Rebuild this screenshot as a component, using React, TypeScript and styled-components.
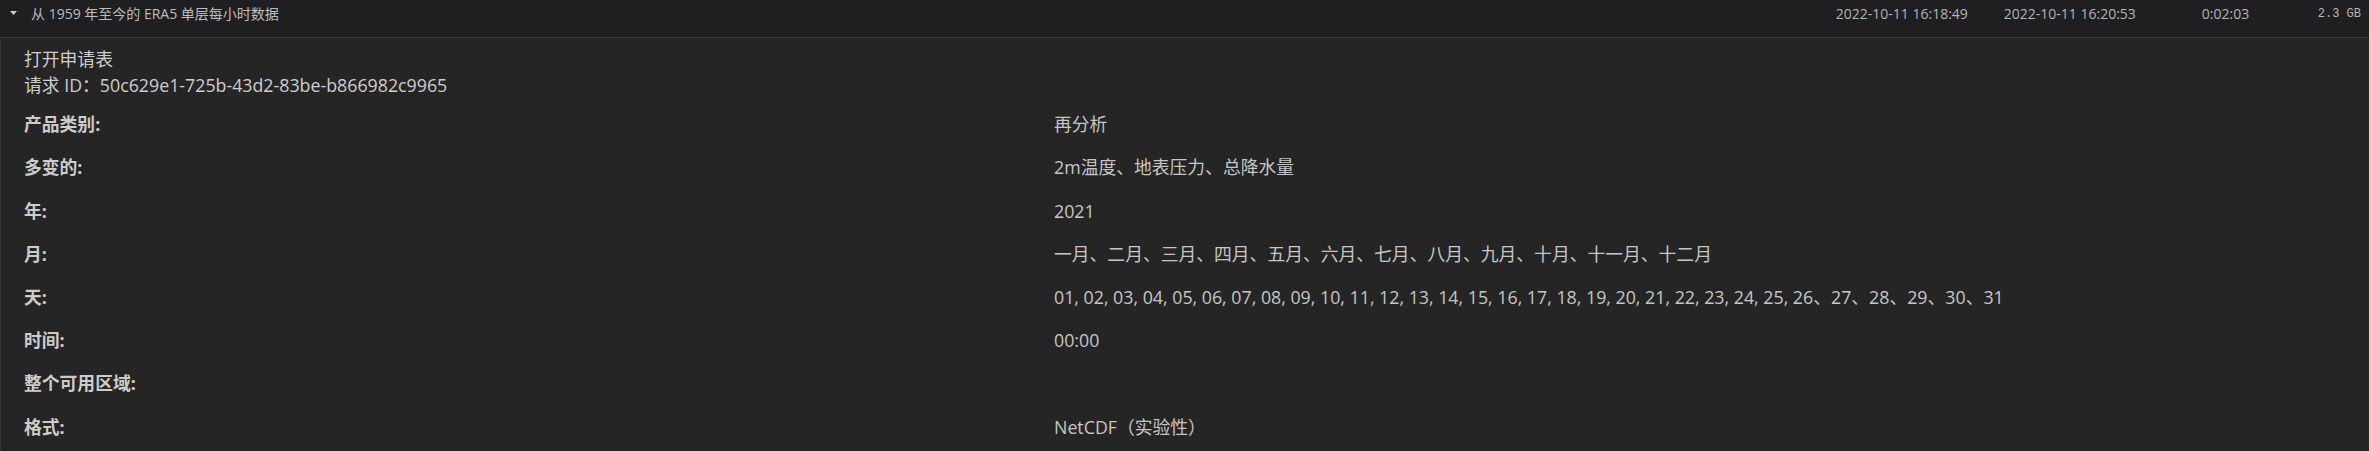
import React from 'react';
import styled, { createGlobalStyle } from 'styled-components';

const GlobalStyle = createGlobalStyle`
  html, body {
    margin: 0;
    padding: 0;
    background: #252525;
  }
  body {
    font-family: "Open Sans", "Noto Sans CJK SC", sans-serif;
  }
`;

const Page = styled.div`
  width: 2369px;
  height: 451px;
  overflow: hidden;
  display: flex;
  flex-direction: column;
  background: #252525;
`;

const Header = styled.div`
  display: flex;
  align-items: flex-start;
  height: 38px;
  box-sizing: border-box;
  padding: 4px 8px 0 10px;
  background: #1f1f22;
  border-bottom: 1px solid #3a3a3c;
  font-size: 14px;
  line-height: 20px;
  color: #bdbdbd;
  white-space: nowrap;
`;

const Caret = styled.svg`
  flex: none;
  margin-top: 7px;
`;

const Title = styled.div`
  flex: 1;
  margin-left: 14px;
`;

const Cell = styled.div<{ $w: number }>`
  flex: none;
  width: ${(p) => p.$w}px;
  color: #b4b4b4;
`;

const Size = styled.div`
  flex: none;
  font-family: "Liberation Mono", "DejaVu Sans Mono", monospace;
  font-size: 12px;
  color: #b8b8b8;
`;

const Body = styled.div`
  flex: 1;
  border-left: 1px solid #363638;
  padding: 8px 23px 0;
  color: #cdcdcd;
  font-size: 17.8px;
  line-height: 26.4px;
`;

const Intro = styled.div`
  margin-bottom: 4px;
`;

const Row = styled.div`
  display: grid;
  grid-template-columns: 1030px 1fr;
  padding: 8.4px 0;
  min-height: 26.4px;
`;

const Label = styled.div`
  font-weight: 700;
  color: #cccccc;
`;

const Value = styled.div`
  color: #c6c6c6;
  white-space: nowrap;
`;

const days =
  Array.from({ length: 26 }, (_, i) => String(i + 1).padStart(2, '0')).join(', ') +
  '、' +
  ['27', '28', '29', '30', '31'].join('、');

const rows: [string, string][] = [
  ['产品类别:', '再分析'],
  ['多变的:', '2m温度、地表压力、总降水量'],
  ['年:', '2021'],
  ['月:', '一月、二月、三月、四月、五月、六月、七月、八月、九月、十月、十一月、十二月'],
  ['天:', days],
  ['时间:', '00:00'],
  ['整个可用区域:', ''],
  ['格式:', 'NetCDF（实验性）'],
];

const App = () => {
  return (
    <Page>
      <GlobalStyle />
      <Header>
        <Caret width="7" height="4" viewBox="0 0 7 4">
          <path d="M0 0 L7 0 L3.5 4 Z" fill="#cfcfcf" />
        </Caret>
        <Title>从 1959 年至今的 ERA5 单层每小时数据</Title>
        <Cell $w={168}>2022-10-11 16:18:49</Cell>
        <Cell $w={198}>2022-10-11 16:20:53</Cell>
        <Cell $w={116}>0:02:03</Cell>
        <Size>2.3 GB</Size>
      </Header>

      <Body>
        <Intro>
          <div>打开申请表</div>
          <div>请求 ID：50c629e1-725b-43d2-83be-b866982c9965</div>
        </Intro>
        {rows.map(([label, value]) => (
          <Row key={label}>
            <Label>{label}</Label>
            <Value>{value}</Value>
          </Row>
        ))}
      </Body>
    </Page>
  );
};

export default App;
